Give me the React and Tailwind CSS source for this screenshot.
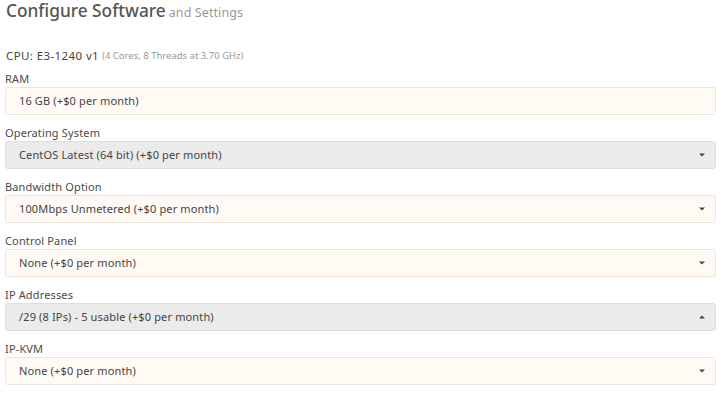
import React from "react";

const font = { fontFamily: '"Noto Sans", "Open Sans", sans-serif' };

function Field({ label, value, variant = "warm", caret = "down", showCaret = true }) {
  const box =
    variant === "gray"
      ? "bg-[#ebebeb] border-[#dddddd]"
      : "bg-[#fffbf4] border-[#ebe5da]";
  return (
    <div className="mb-[10px]">
      <div className="h-[16px] leading-[16px] text-[11px] tracking-[0.15px] text-[#4a4a4a]">{label}</div>
      <div
        className={`h-[28px] border rounded-[3px] flex items-center justify-between pl-[13px] pr-[9px] text-[11px] tracking-[0.14px] text-[#444] ${box}`}
      >
        <span>{value}</span>
        {showCaret && (
          <svg width="6" height="4" viewBox="0 0 6 4" className="mr-[1px]">
            {caret === "down" ? (
              <path d="M0 0.5 H6 L3 3.5 Z" fill="#444" />
            ) : (
              <path d="M0 3.5 H6 L3 0.5 Z" fill="#444" />
            )}
          </svg>
        )}
      </div>
    </div>
  );
}

export default function App() {
  return (
    <div className="w-[723px] h-[393px] bg-white px-[5px] overflow-hidden" style={font}>
      <div className="w-[711px]">
        <div className="h-[24px] flex items-baseline pl-[1px] pt-[1px]">
          <span className="text-[17.3px] leading-[20px] font-medium text-[#555]">Configure Software</span>
          <span className="text-[12.5px] leading-[20px] tracking-[0.1px] text-[#999] ml-[3px]">and Settings</span>
        </div>
        <div className="h-[24px]" />
        <div className="h-[16px] leading-[16px] flex items-center pl-[1px] mb-[7px]">
          <span className="text-[11.5px] tracking-[0.4px] text-[#444]">CPU: E3-1240 v1</span>
          <span className="text-[9.5px] text-[#999] ml-[3px]">(4 Cores, 8 Threads at 3.70 GHz)</span>
        </div>
        <Field label="RAM" value="16 GB (+$0 per month)" showCaret={false} />
        <Field label="Operating System" value="CentOS Latest (64 bit) (+$0 per month)" variant="gray" />
        <Field label="Bandwidth Option" value="100Mbps Unmetered (+$0 per month)" />
        <Field label="Control Panel" value="None (+$0 per month)" />
        <Field label="IP Addresses" value="/29 (8 IPs) - 5 usable (+$0 per month)" variant="gray" caret="up" />
        <Field label="IP-KVM" value="None (+$0 per month)" />
      </div>
    </div>
  );
}
